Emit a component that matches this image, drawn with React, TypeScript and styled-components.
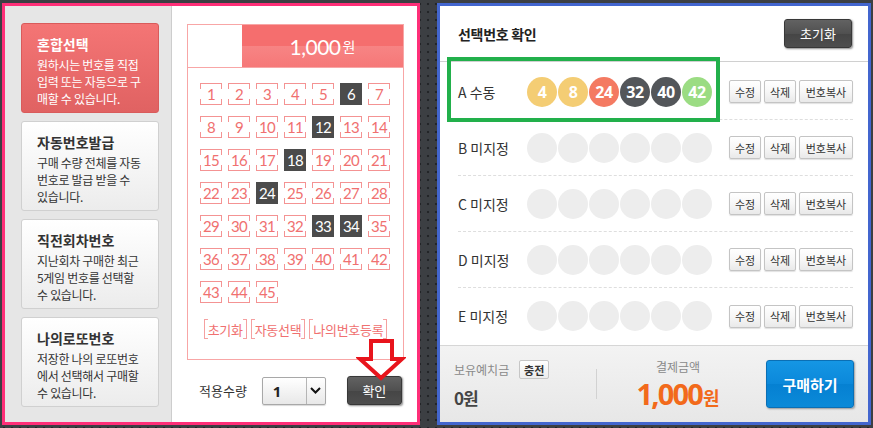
import React from 'react';
import styled, { createGlobalStyle } from 'styled-components';

const GlobalStyle = createGlobalStyle`
  html, body { margin: 0; padding: 0; }
  body {
    width: 873px;
    height: 428px;
    overflow: hidden;
    background-color: #3c3f43;
    background-image: radial-gradient(circle at center, #232528 0 1px, transparent 1.6px);
    background-size: 8px 8px;
    font-family: "Noto Sans CJK KR", "Noto Sans", sans-serif;
  }
`;

const Stage = styled.div`
  display: flex;
  gap: 17px;
  padding: 3px 0 0 2px;
`;

/* ---------- left: number slip ---------- */

const SlipPanel = styled.div`
  position: relative;
  box-sizing: border-box;
  width: 418px;
  height: 422px;
  border: 3px solid #fe2f78;
  background: #fff;
  display: flex;
`;

const Sidebar = styled.div`
  width: 167px;
  border-right: 1px solid #cdcdcd;
  background: #e6e6e6;
  box-sizing: border-box;
  padding: 17px 0 0 16px;
  display: flex;
  flex-direction: column;
  gap: 8px;
`;

const ModeCard = styled.div<{ $active?: boolean }>`
  box-sizing: border-box;
  width: 138px;
  height: 90px;
  padding: 10px 0 0 15px;
  border-radius: 3px;
  border: 1px solid ${p => (p.$active ? '#d95b5b' : '#d0d0d0')};
  background: ${p =>
    p.$active
      ? 'linear-gradient(#f47575, #e06262)'
      : 'linear-gradient(#ffffff, #ececec)'};
  color: ${p => (p.$active ? '#fff' : '#333')};
`;

const ModeTitle = styled.div`
  font-size: 14px;
  font-weight: 700;
  line-height: 20px;
  margin-bottom: 2px;
`;

const ModeDesc = styled.div`
  font-size: 12px;
  line-height: 17px;
  white-space: nowrap;
  letter-spacing: -0.3px;
`;

const SlipBody = styled.div`
  flex: 1;
  padding: 18px 13px 0 15px;
`;

const SlipBox = styled.div`
  box-sizing: border-box;
  height: 336px;
  border: 1px solid #f8a6a6;
`;

const SlipHead = styled.div`
  display: flex;
  height: 42px;
  border-bottom: 1px solid #f8a6a6;
`;

const HeadBlank = styled.div`
  width: 54px;
`;

const HeadPrice = styled.div`
  flex: 1;
  display: flex;
  align-items: center;
  justify-content: center;
  gap: 2px;
  color: #fff;
  background: linear-gradient(#f56e6e 0, #f56e6e 50%, #f78484 50%, #f67878 100%);
`;

const PriceNum = styled.span`
  font-family: Lato, "Noto Sans", sans-serif;
  font-size: 21px;
  letter-spacing: -0.5px;
`;

const PriceUnit = styled.span`
  font-size: 14px;
`;

const NumGrid = styled.div`
  display: grid;
  grid-template-columns: repeat(7, 22px);
  column-gap: 6px;
  row-gap: 11px;
  padding: 15px 12px 0;
`;

const pk = '#f49393';
const line = `linear-gradient(${pk}, ${pk})`;
const bracket = [
  `${line} 0 0 / 100% 1px no-repeat`,
  `${line} 0 100% / 100% 1px no-repeat`,
  `${line} 0 0 / 1px 6px no-repeat`,
  `${line} 100% 0 / 1px 6px no-repeat`,
  `${line} 0 100% / 1px 6px no-repeat`,
  `${line} 100% 100% / 1px 6px no-repeat`,
].join(', ');

const NumCell = styled.span<{ $on?: boolean }>`
  box-sizing: border-box;
  width: 22px;
  height: 22px;
  display: flex;
  align-items: center;
  justify-content: center;
  font-family: Lato, "Noto Sans", sans-serif;
  font-size: 15px;
  letter-spacing: -0.8px;
  color: ${p => (p.$on ? '#fff' : '#f07070')};
  background: ${p => (p.$on ? '#4b4b4b' : bracket)};
`;

const ActionRow = styled.div`
  display: flex;
  justify-content: center;
  gap: 4px;
  margin-top: 16px;
`;

const pk2 = '#f5a0a0';
const line2 = `linear-gradient(${pk2}, ${pk2})`;
const sideBracket = [
  `${line2} 0 0 / 1px 100% no-repeat`,
  `${line2} 100% 0 / 1px 100% no-repeat`,
  `${line2} 0 0 / 4px 1px no-repeat`,
  `${line2} 0 100% / 4px 1px no-repeat`,
  `${line2} 100% 0 / 4px 1px no-repeat`,
  `${line2} 100% 100% / 4px 1px no-repeat`,
].join(', ');

const BracketBtn = styled.span`
  height: 20px;
  padding: 0 4px;
  display: flex;
  align-items: center;
  font-size: 13px;
  letter-spacing: -0.3px;
  color: #f07070;
  background: ${sideBracket};
`;

const ApplyRow = styled.div`
  display: flex;
  align-items: center;
  margin-top: 16px;
  padding-left: 12px;
  height: 29px;
`;

const ApplyLabel = styled.span`
  font-size: 13px;
  color: #333;
  margin-right: 15px;
`;

const QtySelect = styled.div`
  box-sizing: border-box;
  width: 64px;
  height: 28px;
  border: 1px solid #a8a8a8;
  border-radius: 2px;
  background: linear-gradient(#ffffff, #e8e8e8);
  display: flex;
  margin-right: 21px;
  box-shadow: 0 1px 1px rgba(0, 0, 0, 0.15);
`;

const QtyValue = styled.span`
  flex: 1;
  padding-left: 10px;
  display: flex;
  align-items: center;
  font-family: "Noto Sans", sans-serif;
  font-size: 15px;
  font-weight: 700;
  color: #222;
`;

const QtyArrow = styled.span`
  width: 18px;
  border-left: 1px solid #b5b5b5;
  display: flex;
  align-items: center;
  justify-content: center;
`;

const DarkBtn = styled.button<{ $w: number }>`
  box-sizing: border-box;
  width: ${p => p.$w}px;
  height: 29px;
  padding: 0;
  border: 1px solid #383838;
  border-radius: 3px;
  background: linear-gradient(#626262 0, #505050 50%, #454545 50%, #4e4e4e 100%);
  box-shadow: 1px 1px 2px rgba(0, 0, 0, 0.45);
  color: #fff;
  font-family: "Noto Sans CJK KR", sans-serif;
  font-size: 13px;
`;

const ArrowMark = styled.svg`
  position: absolute;
  left: 351px;
  top: 332px;
`;

/* ---------- right: selection check ---------- */

const CheckPanel = styled.div`
  position: relative;
  box-sizing: border-box;
  width: 434px;
  height: 422px;
  border: 3px solid #4366cf;
  background: #fff;
  display: flex;
  flex-direction: column;
`;

const CheckHead = styled.div`
  height: 55px;
  flex: none;
  border-bottom: 1px solid #d0d0d0;
  padding: 0 16px 0 18px;
  display: flex;
  align-items: center;
  justify-content: space-between;
`;

const CheckTitle = styled.span`
  font-size: 14px;
  font-weight: 700;
  color: #222;
  letter-spacing: -0.3px;
`;

const Rows = styled.div`
  flex: 1;
  padding-top: 2px;
`;

const GameRow = styled.div<{ $last?: boolean }>`
  box-sizing: border-box;
  height: 56px;
  margin: 0 15px 0 18px;
  display: flex;
  align-items: center;
  border-bottom: ${p => (p.$last ? 'none' : '1px dashed #dedede')};
`;

const GameLabel = styled.span`
  width: 69px;
  font-size: 14px;
  color: #333;
`;

const Balls = styled.div`
  display: flex;
  gap: 1px;
  margin-right: 17px;
`;

const Ball = styled.span<{ $c: string }>`
  width: 30px;
  height: 30px;
  border-radius: 50%;
  background: ${p => p.$c};
  color: #fff;
  display: flex;
  align-items: center;
  justify-content: center;
  font-family: "Noto Sans", sans-serif;
  font-size: 16px;
  font-weight: 700;
  letter-spacing: -0.5px;
`;

const SmallBtns = styled.div`
  display: flex;
  gap: 3px;
`;

const SmallBtn = styled.button<{ $w: number }>`
  box-sizing: border-box;
  width: ${p => p.$w}px;
  height: 23px;
  padding: 0;
  border: 1px solid #c4c4c4;
  border-radius: 2px;
  background: linear-gradient(#ffffff 0, #f7f7f7 50%, #e9e9e9 100%);
  box-shadow: 0 1px 1px rgba(0, 0, 0, 0.12);
  font-family: "Noto Sans CJK KR", sans-serif;
  font-size: 11px;
  color: #333;
`;

const Highlight = styled.div`
  position: absolute;
  left: 7px;
  top: 51px;
  width: 273px;
  height: 65px;
  box-sizing: border-box;
  border: 4px solid #22b04b;
`;

const Footer = styled.div`
  height: 77px;
  flex: none;
  box-sizing: border-box;
  border-top: 1px solid #d6d6d6;
  background: linear-gradient(#f3f3f3, #e7e7e7);
  padding: 0 14px;
  display: flex;
  align-items: center;
`;

const Deposit = styled.div`
  width: 142px;
  display: flex;
  flex-direction: column;
  gap: 7px;
`;

const DepositTop = styled.div`
  display: flex;
  align-items: center;
  gap: 10px;
  height: 20px;
`;

const MutedLabel = styled.span`
  font-size: 12px;
  line-height: 16px;
  color: #8a8a8a;
`;

const ChargeBtn = styled.button`
  box-sizing: border-box;
  width: 30px;
  height: 19px;
  padding: 0;
  border: 1px solid #c6c6c6;
  border-radius: 2px;
  background: linear-gradient(#ffffff, #ececec);
  font-family: "Noto Sans CJK KR", sans-serif;
  font-size: 11px;
  font-weight: 700;
  color: #333;
`;

const DepositValue = styled.span`
  height: 22px;
  display: flex;
  align-items: center;
  font-size: 17px;
  font-weight: 700;
  color: #444;
  letter-spacing: -1px;
`;

const Divider = styled.span`
  width: 1px;
  height: 30px;
  background: #d2d2d2;
`;

const Payment = styled.div`
  width: 162px;
  display: flex;
  flex-direction: column;
  align-items: center;
  gap: 4px;
`;

const PayAmount = styled.span`
  display: flex;
  align-items: baseline;
  color: #f26a1b;
  font-weight: 700;
  height: 30px;
  line-height: 30px;
`;

const PayNum = styled.span`
  font-family: "Noto Sans", sans-serif;
  font-size: 29px;
  letter-spacing: -1.8px;
`;

const PayUnit = styled.span`
  font-size: 18px;
  margin-left: 1px;
`;

const BuyBtn = styled.button`
  margin-left: auto;
  box-sizing: border-box;
  width: 88px;
  height: 48px;
  padding: 0;
  border: 1px solid #0a6fb5;
  border-radius: 3px;
  background: linear-gradient(#1596e4 0, #0b88da 50%, #0580d2 50%, #0b8ad8 100%);
  box-shadow: 1px 1px 2px rgba(0, 0, 0, 0.35);
  color: #fff;
  font-family: "Noto Sans CJK KR", sans-serif;
  font-size: 15px;
  font-weight: 700;
`;

const modes = [
  { title: '혼합선택', lines: ['원하시는 번호를 직접', '입력 또는 자동으로 구', '매할 수 있습니다.'], active: true },
  { title: '자동번호발급', lines: ['구매 수량 전체를 자동', '번호로 발급 받을 수', '있습니다.'] },
  { title: '직전회차번호', lines: ['지난회차 구매한 최근', '5게임 번호를 선택할', '수 있습니다.'] },
  { title: '나의로또번호', lines: ['저장한 나의 로또번호', '에서 선택해서 구매할', '수 있습니다.'] },
];

const picked = [6, 12, 18, 24, 33, 34];

const ballColor = (n: number) => {
  if (n <= 10) return '#f4cd74';
  if (n <= 20) return '#6bb8e8';
  if (n <= 30) return '#f47a62';
  if (n <= 40) return '#53565a';
  return '#9bdc83';
};

const games = [
  { key: 'A', state: '수동', nums: [4, 8, 24, 32, 40, 42] },
  { key: 'B', state: '미지정', nums: [] as number[] },
  { key: 'C', state: '미지정', nums: [] as number[] },
  { key: 'D', state: '미지정', nums: [] as number[] },
  { key: 'E', state: '미지정', nums: [] as number[] },
];

export default function App() {
  return (
    <>
      <GlobalStyle />
      <Stage>
        <SlipPanel>
          <Sidebar>
            {modes.map(m => (
              <ModeCard key={m.title} $active={m.active}>
                <ModeTitle>{m.title}</ModeTitle>
                {m.lines.map(l => (
                  <ModeDesc key={l}>{l}</ModeDesc>
                ))}
              </ModeCard>
            ))}
          </Sidebar>
          <SlipBody>
            <SlipBox>
              <SlipHead>
                <HeadBlank />
                <HeadPrice>
                  <PriceNum>1,000</PriceNum>
                  <PriceUnit>원</PriceUnit>
                </HeadPrice>
              </SlipHead>
              <NumGrid>
                {Array.from({ length: 45 }, (_, i) => i + 1).map(n => (
                  <NumCell key={n} $on={picked.includes(n)}>
                    {n}
                  </NumCell>
                ))}
              </NumGrid>
              <ActionRow>
                <BracketBtn>초기화</BracketBtn>
                <BracketBtn>자동선택</BracketBtn>
                <BracketBtn>나의번호등록</BracketBtn>
              </ActionRow>
            </SlipBox>
            <ApplyRow>
              <ApplyLabel>적용수량</ApplyLabel>
              <QtySelect>
                <QtyValue>1</QtyValue>
                <QtyArrow>
                  <svg width="11" height="7" viewBox="0 0 11 7">
                    <path d="M1 1l4.5 4.5L10 1" fill="none" stroke="#111" strokeWidth="2" />
                  </svg>
                </QtyArrow>
              </QtySelect>
              <DarkBtn $w={55}>확인</DarkBtn>
            </ApplyRow>
          </SlipBody>
          <ArrowMark width="50" height="44" viewBox="0 0 50 44">
            <polygon
              points="15,3 36,3 36,21 46,21 25,40 4,21 15,21"
              fill="none"
              stroke="#e8141c"
              strokeWidth="4"
            />
          </ArrowMark>
        </SlipPanel>

        <CheckPanel>
          <CheckHead>
            <CheckTitle>선택번호 확인</CheckTitle>
            <DarkBtn $w={68}>초기화</DarkBtn>
          </CheckHead>
          <Rows>
            {games.map((g, i) => (
              <GameRow key={g.key} $last={i === games.length - 1}>
                <GameLabel>
                  {g.key} {g.state}
                </GameLabel>
                <Balls>
                  {Array.from({ length: 6 }, (_, j) => {
                    const n = g.nums[j];
                    return (
                      <Ball key={j} $c={n ? ballColor(n) : '#ededed'}>
                        {n ?? ''}
                      </Ball>
                    );
                  })}
                </Balls>
                <SmallBtns>
                  <SmallBtn $w={32}>수정</SmallBtn>
                  <SmallBtn $w={32}>삭제</SmallBtn>
                  <SmallBtn $w={54}>번호복사</SmallBtn>
                </SmallBtns>
              </GameRow>
            ))}
          </Rows>
          <Footer>
            <Deposit>
              <DepositTop>
                <MutedLabel>보유예치금</MutedLabel>
                <ChargeBtn>충전</ChargeBtn>
              </DepositTop>
              <DepositValue>0원</DepositValue>
            </Deposit>
            <Divider />
            <Payment>
              <MutedLabel>결제금액</MutedLabel>
              <PayAmount>
                <PayNum>1,000</PayNum>
                <PayUnit>원</PayUnit>
              </PayAmount>
            </Payment>
            <BuyBtn>구매하기</BuyBtn>
          </Footer>
          <Highlight />
        </CheckPanel>
      </Stage>
    </>
  );
}
